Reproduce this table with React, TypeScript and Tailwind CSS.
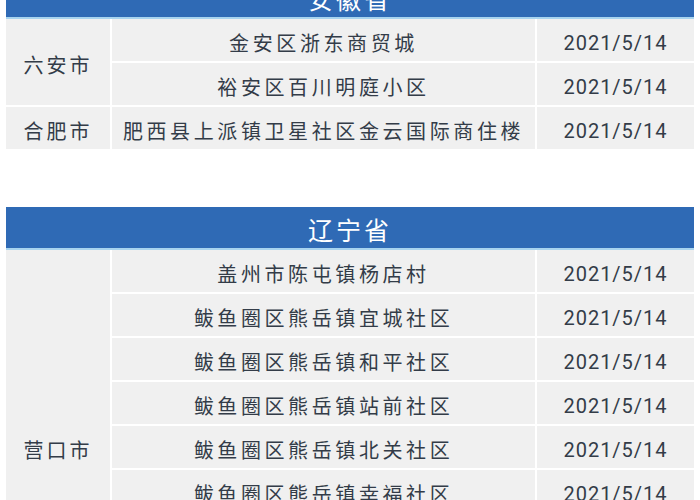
import React from 'react'

type Group = { city: string; rows: { place: string; date: string }[] }

const provinces: { name: string; groups: Group[] }[] = [
  {
    name: '安徽省',
    groups: [
      {
        city: '六安市',
        rows: [
          { place: '金安区浙东商贸城', date: '2021/5/14' },
          { place: '裕安区百川明庭小区', date: '2021/5/14' },
        ],
      },
      {
        city: '合肥市',
        rows: [{ place: '肥西县上派镇卫星社区金云国际商住楼', date: '2021/5/14' }],
      },
    ],
  },
  {
    name: '辽宁省',
    groups: [
      {
        city: '营口市',
        rows: [
          { place: '盖州市陈屯镇杨店村', date: '2021/5/14' },
          { place: '鲅鱼圈区熊岳镇宜城社区', date: '2021/5/14' },
          { place: '鲅鱼圈区熊岳镇和平社区', date: '2021/5/14' },
          { place: '鲅鱼圈区熊岳镇站前社区', date: '2021/5/14' },
          { place: '鲅鱼圈区熊岳镇北关社区', date: '2021/5/14' },
          { place: '鲅鱼圈区熊岳镇幸福社区', date: '2021/5/14' },
          { place: '鲅鱼圈区熊岳镇东关社区', date: '2021/5/14' },
          { place: '鲅鱼圈区熊岳镇南关社区', date: '2021/5/14' },
          { place: '鲅鱼圈区熊岳镇西关社区', date: '2021/5/14' },
        ],
      },
    ],
  },
]

const cjk = { fontFamily: '"Noto Sans CJK SC", "Noto Sans", sans-serif' }
const num = { fontFamily: 'Roboto, "Noto Sans", sans-serif' }

const ProvinceTable = ({ name, groups }: { name: string; groups: Group[] }) => {
  let line = 1
  return (
    <div className="w-[688px] mx-auto">
      <div className="h-[43px] pt-[5px] bg-[#2f6ab5] border-b-2 border-[#a8d4ef] flex items-center justify-center text-white text-[25px] tracking-[3px]" style={cjk}>
        {name}
      </div>
      <div className="grid grid-cols-[104px_1fr_157px] auto-rows-[42px] gap-[2px] bg-white text-[#333c48]">
        {groups.map((g) => {
          const start = line
          line += g.rows.length
          return (
            <React.Fragment key={g.city}>
              <div
                className="bg-[#f0f0f0] col-start-1 flex items-center justify-center pt-[5px] text-[20px] tracking-[3px]"
                style={{ ...cjk, gridRow: `${start} / span ${g.rows.length}` }}
              >
                {g.city}
              </div>
              {g.rows.map((r, i) => (
                <React.Fragment key={r.place}>
                  <div
                    className="bg-[#f0f0f0] col-start-2 flex items-center justify-center pt-[5px] text-[20px] tracking-[3.6px]"
                    style={{ ...cjk, gridRow: start + i }}
                  >
                    {r.place}
                  </div>
                  <div
                    className="bg-[#f0f0f0] col-start-3 flex items-center justify-center pt-[5px] text-[20px] tracking-[1px]"
                    style={{ ...num, gridRow: start + i }}
                  >
                    {r.date}
                  </div>
                </React.Fragment>
              ))}
            </React.Fragment>
          )
        })}
      </div>
    </div>
  )
}

export default function App() {
  return (
    <div className="w-[700px] h-[500px] overflow-hidden bg-white">
      <div className="-mt-[24px] flex flex-col gap-[58px]">
        {provinces.map((p) => (
          <ProvinceTable key={p.name} name={p.name} groups={p.groups} />
        ))}
      </div>
    </div>
  )
}
